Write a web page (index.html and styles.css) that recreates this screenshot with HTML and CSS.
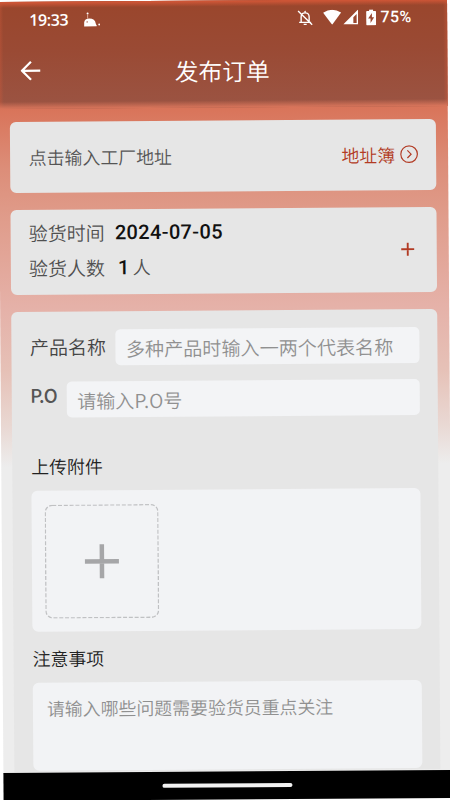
FILE: index.html
```
<!DOCTYPE html>
<html lang="zh-CN">
<head>
<meta charset="utf-8">
<title>发布订单</title>
<link rel="stylesheet" href="styles.css">
</head>
<body>
<div class="phone">
  <header class="header">
    <div class="status">
      <span class="clock">19:33</span>
      <svg class="whale" width="18" height="16" viewBox="0 0 18 16"><path fill="#fff" d="M1 15V11Q1.500 7 6 7Q12 7 12.500 12Q12.800 13.500 13.500 14V15Z"/><circle cx="4.500" cy="2" r="1" fill="#fff"/><path d="M4.500 3V7" stroke="#dfa594" stroke-width="1"/><circle cx="16" cy="13.200" r=".9" fill="#fff"/><circle cx="4" cy="10.500" r=".7" fill="#9a4932"/></svg>
      <div class="indicators">
        <svg class="bell" width="16" height="16" viewBox="0 0 16 16" fill="none" stroke="#fff" stroke-width="1.400"><path d="M2 12.500H14M4 12.500V7Q4 3 8 3Q12 3 12 7V12.500M8 3V1M1 1L15 15"/><path d="M6.500 14.500H9.500"/></svg>
        <svg class="wifi" width="18" height="15" viewBox="0 0 18 15"><path fill="#fff" d="M0 3Q9-3 18 3L9 15Z"/></svg>
        <svg class="signal" width="15" height="15" viewBox="0 0 15 15"><path fill="#fff" fill-rule="evenodd" d="M15 0V15H0ZM13.500 4.500L10.200 7.700V13.500H13.500Z"/></svg>
        <svg class="battery" width="10" height="16" viewBox="0 0 10 16"><path fill="#fff" d="M3 0H7V1.500H9Q10 1.500 10 2.500V15Q10 16 9 16H1Q0 16 0 15V2.500Q0 1.500 1 1.500H3Z"/><path fill="#9a4932" d="M5.800 3.500L2 9H4.400V13.500L8 7.800H5.800Z"/></svg>
        <span class="percent">75%</span>
      </div>
    </div>
    <div class="navbar">
      <svg class="back" width="20" height="20" viewBox="0 0 20 20" fill="none" stroke="#fff" stroke-width="2.200"><path d="M20 10H2M10.500 1L1.500 10L10.500 19"/></svg>
      <h1 class="title">发布订单</h1>
    </div>
  </header>
  <main class="content">
    <section class="card address">
      <span class="address-hint">点击输入工厂地址</span>
      <span class="book">地址簿
        <svg width="18" height="18" viewBox="0 0 18 18" fill="none" stroke="#b23b24" stroke-width="1.200"><circle cx="9" cy="9" r="8.300"/><path d="M7.300 5.200L11 9L7.300 12.800"/></svg>
      </span>
    </section>
    <section class="card inspect">
      <div class="lines">
        <div class="line"><span>验货时间</span><b class="date">2024-07-05</b></div>
        <div class="line"><span>验货人数</span><b class="count">1</b><span class="unit">人</span></div>
      </div>
      <svg width="14" height="14" viewBox="0 0 14 14" stroke="#b23b24" stroke-width="1.900"><path d="M7 .5V13.500M.5 7H13.500"/></svg>
    </section>
    <section class="card form">
      <div class="field"><label>产品名称</label><div class="box">多种产品时输入一两个代表名称</div></div>
      <div class="field"><label class="po">P.O</label><div class="box">请输入P.O号</div></div>
      <h2 class="heading upload-title">上传附件</h2>
      <div class="upload">
        <div class="tile">
          <svg width="114" height="114" viewBox="0 0 114 114" fill="none"><rect x=".7" y=".7" width="112.600" height="112.600" rx="7" stroke="#c0c1c3" stroke-width="1.300" stroke-dasharray="4 1.800"/><path d="M57 40V74M40 57H74" stroke="#a6a6a8" stroke-width="4.500"/></svg>
        </div>
      </div>
      <h2 class="heading notes-title">注意事项</h2>
      <div class="notes">请输入哪些问题需要验货员重点关注</div>
    </section>
  </main>
  <footer class="gesture"><div class="handle"></div></footer>
</div>
</body>
</html>
```
FILE: styles.css
```
* { box-sizing: border-box; }
html, body { margin: 0; width: 450px; height: 800px; overflow: hidden; background: #fff; }
body { font-family: "Noto Sans CJK SC", sans-serif; font-weight: 350; padding-top: 2px; }
.phone {
  width: 448.5px; height: 799px; margin-left: -2px;
  display: flex; flex-direction: column;
  transform: rotate(-0.4deg); transform-origin: 2px -2px;
  background: linear-gradient(#cc5536 0, #cc5536 4px, #d36a4c 80px, #d9755b 110px, #dc8d78 165px, #e09d8c 220px, #e5b1a8 305px, #e6c1b7 370px, #e9d8d3 425px, #ededed 465px);
}
.header {
  flex: none; height: 107px; padding: 4px 35px 0 21px;
  background:
    linear-gradient(#cc5536 1px, rgba(204, 85, 54, 0) 6px),
    linear-gradient(to top, #d9755b, rgba(217, 117, 91, 0) 7px),
    linear-gradient(to right, rgba(204, 90, 60, .35) 2px, rgba(204, 90, 60, 0) 5px),
    linear-gradient(to left, rgba(204, 90, 60, .35) 1px, rgba(204, 90, 60, 0) 4px),
    linear-gradient(#9a462c, #9a4a34 45%, #9b5443);
  color: #fff;
}
.status { display: flex; align-items: center; height: 25px; padding-left: 10px; }
.clock { font: 600 16px "Open Sans", sans-serif; letter-spacing: -.4px; width: 54px; padding-top: 3px; }
.whale { margin-top: 3px; }
.indicators { margin-left: auto; display: flex; align-items: center; padding-top: 2px; }
.bell { margin-right: 10px; }
.wifi { margin-right: 2px; }
.signal { margin-right: 8px; }
.battery { margin-right: 4px; }
.percent { font: 500 16px Roboto, sans-serif; letter-spacing: .4px; }
.navbar { display: grid; grid-template-columns: 20px 1fr 20px; align-items: center; height: 79px; }
.back { margin-left: 1px; }
.title { margin: 0; text-align: center; font-size: 23.8px; font-weight: 350; line-height: 36px; padding: 2px 0 0 13px; }
.content { flex: 1; min-height: 0; padding: 12.5px 11.5px 0 11.2px; display: flex; flex-direction: column; }
.card { flex: none; background: #e6e6e6; border-radius: 6px; }
.address { height: 71.5px; padding: 0 18px 0 18.5px; display: flex; align-items: center; justify-content: space-between; }
.address-hint { font-size: 17.9px; color: #555; }
.book { display: flex; align-items: center; gap: 5px; font-size: 17.9px; color: #b23b24; }
.inspect { height: 85px; margin-top: 17px; padding: 4px 22px 10px 18px; display: flex; align-items: center; justify-content: space-between; }
.inspect svg { margin-top: 4px; }
.line { display: flex; align-items: center; height: 35px; font-size: 19px; color: #505050; }
.date, .count { font: 500 20px Roboto, sans-serif; letter-spacing: .35px; color: #111; margin-left: 10px; padding-top: 2px; }
.count { margin-left: 13px; }
.unit { margin-left: 3px; font-size: 18px; }
.form { height: 460px; margin-top: 17px; padding: 18px 18.5px 0 18.8px; border-radius: 6px 6px 0 0; }
.field { display: flex; height: 36px; margin-bottom: 15.5px; }
.field label { width: 85.5px; font-size: 19px; line-height: 33px; color: #444; margin-left: -.5px; margin-right: .5px; }
.field .po { width: 36.3px; font-size: 18.5px; font-weight: 500; color: #555; letter-spacing: -.8px; line-height: 27px; }
.box { flex: 1; border-radius: 5px; background: #f3f4f6; padding-left: 10px; font-size: 19.1px; line-height: 39px; color: #909090; white-space: nowrap; }
.heading { margin: 0; font-size: 17.9px; font-weight: 350; line-height: 26px; color: #222; }
.upload-title { padding-top: 20px; }
.upload { height: 141px; margin-top: 12.2px; padding: 14px 13.5px; border-radius: 6px; background: #f2f3f5; }
.tile { width: 114px; height: 113px; }
.tile svg { display: block; }
.notes-title { margin-top: 12.5px; }
.notes { height: 88px; margin-top: 12.5px; padding: 11.5px 14px; border-radius: 6px; background: #f2f3f5; font-size: 17.9px; line-height: 26px; color: #909090; white-space: nowrap; }
.gesture { flex: none; height: 28.5px; background: #000; display: flex; justify-content: center; padding-top: 12px; }
.handle { width: 130px; height: 4px; border-radius: 2px; background: #f1f1f1; }
```
